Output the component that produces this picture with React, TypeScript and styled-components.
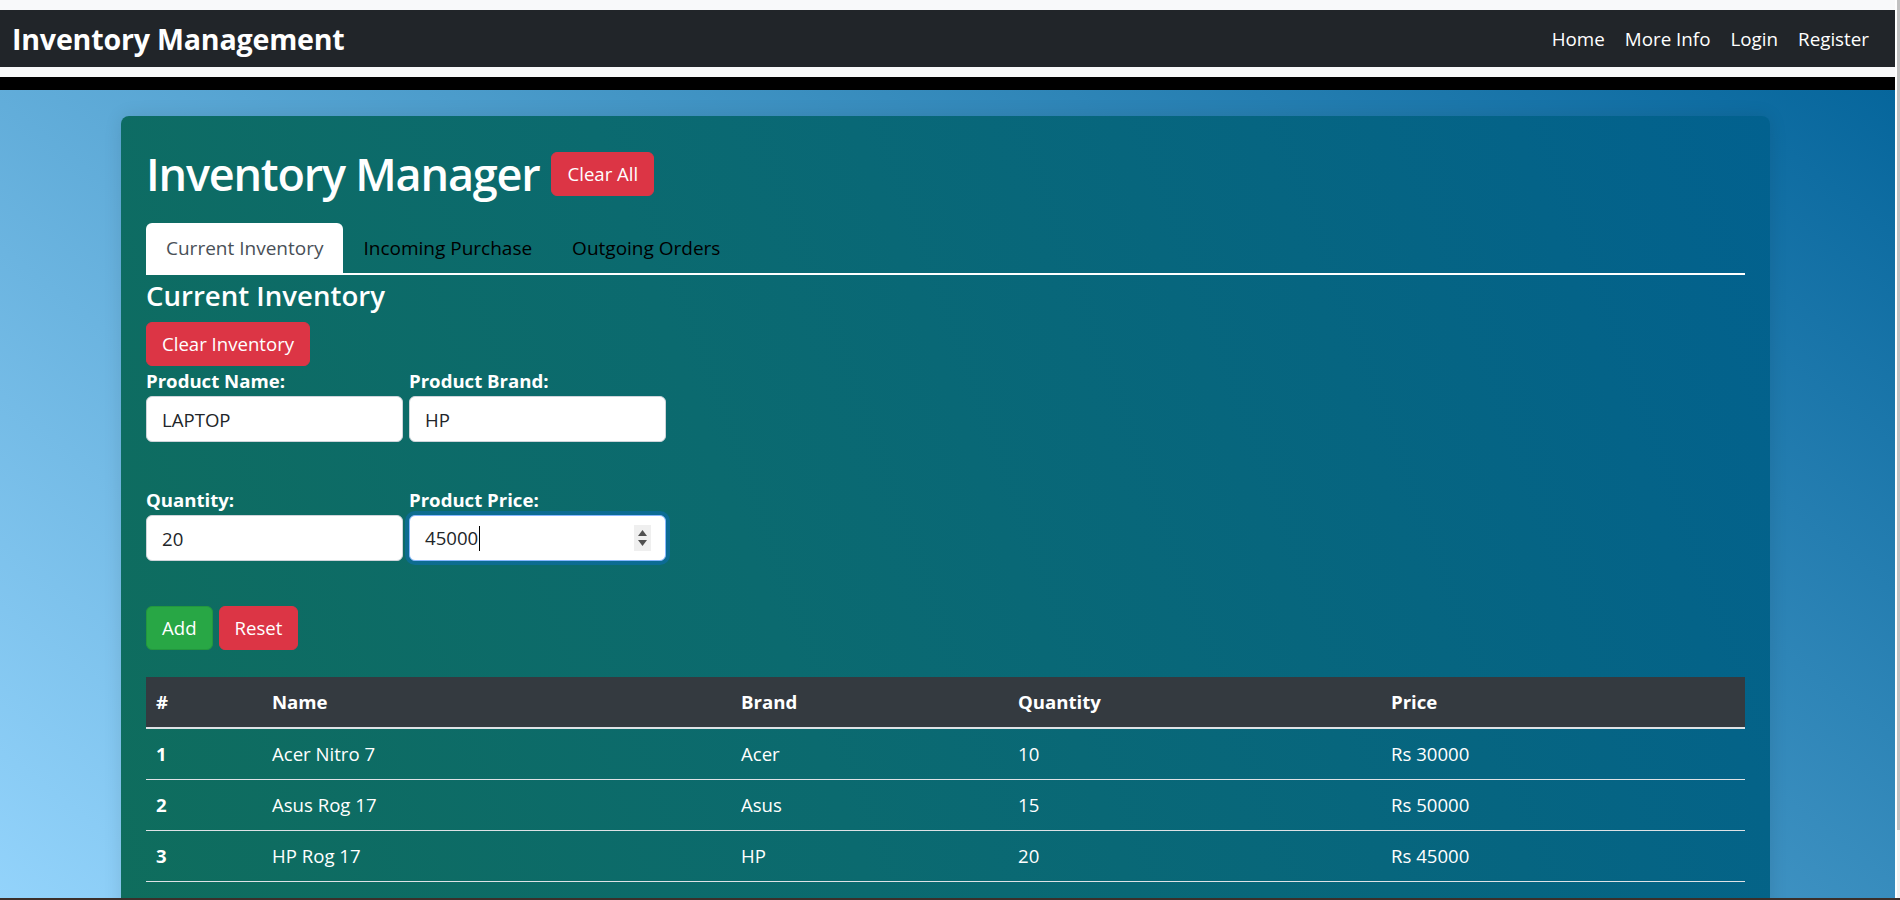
import React from "react";
import styled, { createGlobalStyle, css } from "styled-components";

const GlobalStyle = createGlobalStyle`
  html, body {
    margin: 0;
    padding: 0;
    height: 100%;
    overflow: hidden;
  }
  body {
    font-family: "Open Sans", "Noto Sans", Arial, sans-serif;
  }
  #root { height: 100%; }
  *, *::before, *::after { box-sizing: border-box; }
`;

const Shell = styled.div`
  height: 900px;
  display: flex;
  flex-direction: column;
`;

const Viewport = styled.div`
  flex: 1;
  min-height: 0;
  display: flex;
`;

const Page = styled.div`
  flex: 1;
  min-width: 0;
  display: flex;
  flex-direction: column;
  background: #f8f9fa;
  padding-top: 10px;
`;

const Navbar = styled.nav`
  flex-shrink: 0;
  height: 57px;
  background: #212529;
  display: flex;
  align-items: center;
  justify-content: space-between;
  padding: 0 16px 0 12px;
`;

const Brand = styled.a`
  color: #fff;
  font-weight: 700;
  font-size: 28.6px;
  text-decoration: none;
  letter-spacing: -0.2px;
`;

const NavList = styled.ul`
  display: flex;
  list-style: none;
  margin: 0;
  padding: 0;
`;

const NavLink = styled.a`
  display: block;
  color: #fff;
  font-size: 18.8px;
  padding: 0 10px;
  text-decoration: none;
`;

const BlackBar = styled.div`
  flex-shrink: 0;
  height: 13px;
  margin-top: 10px;
  background: #000;
`;

const Main = styled.main`
  flex: 1;
  min-height: 0;
  overflow: hidden;
  background: linear-gradient(38deg, #93d3fb 0%, #06669c 100%);
  padding: 26px 0 0 121px;
`;

const Card = styled.section`
  width: 1649px;
  min-height: 880px;
  border-radius: 8px;
  padding: 28px 25px 25px;
  color: #fff;
  background: linear-gradient(70deg, #0f6d5c 0%, #0b6a6f 40%, #02618f 100%);
  box-shadow: 0 0 18px rgba(0, 0, 0, 0.1);
`;

const TitleRow = styled.div`
  display: flex;
  align-items: center;
  gap: 12px;
  margin-bottom: 19px;
`;

const Title = styled.h1`
  margin: 0;
  font-size: 45px;
  font-weight: 600;
  letter-spacing: -1.2px;
  line-height: 60px;
`;

const Button = styled.button<{ $variant: "danger" | "success" }>`
  font-family: inherit;
  font-size: 18.6px;
  line-height: 30px;
  padding: 6px 15px;
  border-radius: 6px;
  color: #fff;
  cursor: pointer;
  ${(p) =>
    p.$variant === "danger"
      ? css`
          background: #dc3545;
          border: 1px solid #dc3545;
        `
      : css`
          background: #28a745;
          border: 1px solid #23973e;
        `}
`;

const TabList = styled.div`
  display: flex;
  border-bottom: 2px solid #fff;
`;

const Tab = styled.button<{ $active?: boolean }>`
  font-family: inherit;
  font-size: 19px;
  line-height: 30px;
  padding: 10px 20px;
  border: 0;
  border-radius: 6px 6px 0 0;
  background: ${(p) => (p.$active ? "#fff" : "transparent")};
  color: ${(p) => (p.$active ? "#495057" : "#000")};
  cursor: pointer;
`;

const SectionTitle = styled.h3`
  margin: 0;
  font-size: 27.6px;
  font-weight: 600;
  line-height: 40px;
`;

const SectionActions = styled.div`
  margin-top: 7px;
`;

const FormGrid = styled.div`
  display: grid;
  grid-template-columns: 257px 257px;
  column-gap: 6px;
  row-gap: 43px;
`;

const Field = styled.div`
  display: flex;
  flex-direction: column;
`;

const Label = styled.label`
  font-weight: 700;
  font-size: 18.6px;
  line-height: 30px;
`;

const inputBase = css`
  height: 46px;
  width: 100%;
  padding: 7px 15px;
  font-family: inherit;
  font-size: 18.6px;
  line-height: 30px;
  color: #212529;
  background: #fff;
  border: 1px solid #ced4da;
  border-radius: 6px;
`;

const Input = styled.input`
  ${inputBase}
  outline: none;
`;

const FocusedBox = styled.div`
  ${inputBase}
  position: relative;
  display: flex;
  align-items: center;
  border-color: #86b7fe;
  box-shadow: 0 0 0 4px rgba(13, 110, 253, 0.28);
`;

const Caret = styled.span`
  display: inline-block;
  width: 1px;
  height: 25px;
  background: #000;
  margin-left: 1px;
`;

const Spinner = styled.div`
  position: absolute;
  right: 14px;
  top: 50%;
  transform: translateY(-50%);
  width: 17px;
  height: 26px;
  background: #efefef;
  display: flex;
  flex-direction: column;
  align-items: center;
  justify-content: center;
  gap: 4px;
`;

const ActionRow = styled.div`
  display: flex;
  gap: 6px;
  margin-top: 45px;
  margin-bottom: 27px;
`;

const Table = styled.table`
  width: 100%;
  border-collapse: collapse;
  table-layout: fixed;
  font-size: 18.6px;
  line-height: 30px;
`;

const HeadCell = styled.th`
  background: #343a40;
  text-align: left;
  font-weight: 700;
  padding: 10px;
  border-bottom: 2px solid #dee2e6;
`;

const RowHead = styled.th`
  text-align: left;
  font-weight: 700;
  padding: 10px;
  border-bottom: 1px solid #dee2e6;
`;

const Cell = styled.td`
  padding: 10px;
  border-bottom: 1px solid #dee2e6;
`;

const Scrollbar = styled.div`
  width: 5px;
  flex-shrink: 0;
  border-left: 2px solid #fff;
  background: #f1f1f1;
  display: flex;
  flex-direction: column;
`;

const ScrollThumb = styled.div`
  height: 830px;
  background: #c1c1c1;
`;

const BottomLine = styled.div`
  height: 2px;
  background: #3b2f2a;
  flex-shrink: 0;
`;

const rows = [
  { id: 1, name: "Acer Nitro 7", brand: "Acer", qty: 10, price: 30000 },
  { id: 2, name: "Asus Rog 17", brand: "Asus", qty: 15, price: 50000 },
  { id: 3, name: "HP Rog 17", brand: "HP", qty: 20, price: 45000 },
];

const colWidths = [116, 469, 277, 373, 364];

export default function App() {
  return (
    <>
      <GlobalStyle />
      <Shell>
        <Viewport>
          <Page>
            <Navbar>
              <Brand href="#">Inventory Management</Brand>
              <NavList>
                <li><NavLink href="#">Home</NavLink></li>
                <li><NavLink href="#">More Info</NavLink></li>
                <li><NavLink href="#">Login</NavLink></li>
                <li><NavLink href="#">Register</NavLink></li>
              </NavList>
            </Navbar>
            <BlackBar />
            <Main>
              <Card>
                <TitleRow>
                  <Title>Inventory Manager</Title>
                  <Button $variant="danger">Clear All</Button>
                </TitleRow>
                <TabList>
                  <Tab $active>Current Inventory</Tab>
                  <Tab>Incoming Purchase</Tab>
                  <Tab>Outgoing Orders</Tab>
                </TabList>
                <SectionTitle>Current Inventory</SectionTitle>
                <SectionActions>
                  <Button $variant="danger">Clear Inventory</Button>
                </SectionActions>
                <FormGrid>
                  <Field>
                    <Label>Product Name:</Label>
                    <Input readOnly value="LAPTOP" />
                  </Field>
                  <Field>
                    <Label>Product Brand:</Label>
                    <Input readOnly value="HP" />
                  </Field>
                  <Field>
                    <Label>Quantity:</Label>
                    <Input readOnly value="20" />
                  </Field>
                  <Field>
                    <Label>Product Price:</Label>
                    <FocusedBox role="spinbutton" aria-valuenow={45000}>
                      <span>45000</span>
                      <Caret />
                      <Spinner>
                        <svg width="9" height="6" viewBox="0 0 9 6">
                          <path d="M4.5 0 L9 6 L0 6 Z" fill="#505050" />
                        </svg>
                        <svg width="9" height="6" viewBox="0 0 9 6">
                          <path d="M0 0 L9 0 L4.5 6 Z" fill="#505050" />
                        </svg>
                      </Spinner>
                    </FocusedBox>
                  </Field>
                </FormGrid>
                <ActionRow>
                  <Button $variant="success">Add</Button>
                  <Button $variant="danger">Reset</Button>
                </ActionRow>
                <Table>
                  <colgroup>
                    {colWidths.map((w, i) => (
                      <col key={i} style={{ width: w }} />
                    ))}
                  </colgroup>
                  <thead>
                    <tr>
                      <HeadCell>#</HeadCell>
                      <HeadCell>Name</HeadCell>
                      <HeadCell>Brand</HeadCell>
                      <HeadCell>Quantity</HeadCell>
                      <HeadCell>Price</HeadCell>
                    </tr>
                  </thead>
                  <tbody>
                    {rows.map((r) => (
                      <tr key={r.id}>
                        <RowHead scope="row">{r.id}</RowHead>
                        <Cell>{r.name}</Cell>
                        <Cell>{r.brand}</Cell>
                        <Cell>{r.qty}</Cell>
                        <Cell>Rs {r.price}</Cell>
                      </tr>
                    ))}
                  </tbody>
                </Table>
              </Card>
            </Main>
          </Page>
          <Scrollbar>
            <ScrollThumb />
          </Scrollbar>
        </Viewport>
        <BottomLine />
      </Shell>
    </>
  );
}
